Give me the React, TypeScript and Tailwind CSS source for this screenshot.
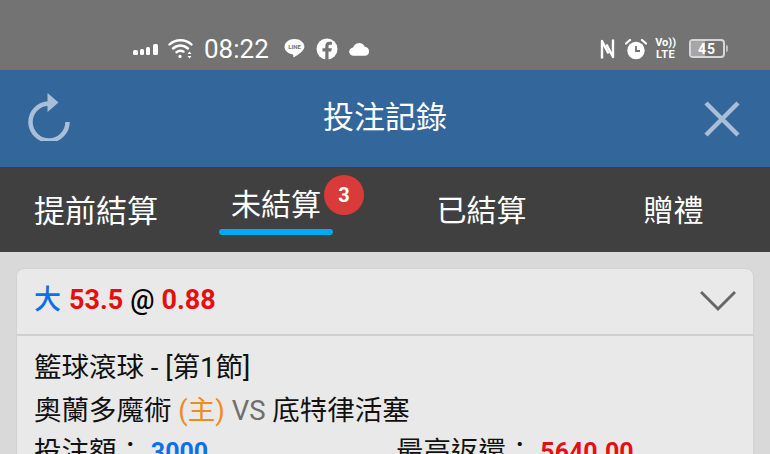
const cjk = "font-['Roboto','Noto_Sans_CJK_TC',sans-serif]"

function SignalBars() {
  return (
    <svg width="26" height="12" viewBox="0 0 26 12" fill="#fff">
      <rect x="0" y="7" width="5" height="5" rx="1.5" />
      <rect x="7" y="6" width="4" height="6" rx="1.5" />
      <rect x="13" y="4" width="4" height="8" rx="1.5" />
      <rect x="20" y="1" width="5" height="11" rx="1.5" />
    </svg>
  )
}

function Wifi() {
  return (
    <svg width="26" height="21" viewBox="0 0 26 21" fill="none" stroke="#fff" strokeWidth="2.4" strokeLinecap="round">
      <path d="M1.5 6.5C7.5 .8 17.5 .8 23.5 6.5" />
      <path d="M5 10.5C9.5 6.5 15.5 6.5 20 10.5" />
      <path d="M8.5 14.2C10.8 12.4 13.2 12.4 15.5 13.6" />
      <circle cx="12" cy="18.4" r="1.6" fill="#fff" stroke="none" />
      <path d="M21.5 13.5l-2 2.5h4zM21.5 20.5l-2-2.5h4z" fill="#fff" stroke="none" />
    </svg>
  )
}

function LineIcon() {
  return (
    <svg width="21" height="21" viewBox="0 0 21 21">
      <path d="M10.5 1C5 1 .5 4.5.5 8.8c0 3.9 3.6 7 8.3 7.6.7.2.6.8.5 1.8-.1.9.3 1.2 1.2.7 3-1.7 9.9-5.9 9.9-10.1C20.5 4.5 16 1 10.5 1z" fill="#fff" />
      <text x="10.5" y="11" textAnchor="middle" fontSize="6" fontWeight="700" fill="#737373" fontFamily="Roboto">LINE</text>
    </svg>
  )
}

function Facebook() {
  return (
    <svg width="22" height="22" viewBox="0 0 22 22">
      <circle cx="11" cy="11" r="10.5" fill="#fff" />
      <path d="M12.5 22v-8.5h2.8l.5-3.3h-3.300V8.400c0-1 .4-1.700 1.800-1.700h1.600V3.900c-.6-.1-1.500-.2-2.400-.2-2.600 0-4.200 1.500-4.200 4.300v2.200H6.500v3.300h2.800V22z" fill="#737373" />
    </svg>
  )
}

function Cloud() {
  return (
    <svg width="21" height="14" viewBox="0 0 20 13" fill="#fff">
      <path d="M4.5 13a4 4 0 0 1-.6-8A6 6 0 0 1 15 4.300 4.400 4.400 0 0 1 15.500 13z" />
    </svg>
  )
}

function NfcIcon() {
  return (
    <svg width="15" height="24" viewBox="0 0 15 24" fill="none" stroke="#fff" strokeWidth="2.4" strokeLinejoin="round">
      <path d="M2 21.500V4l6.500 12.500" />
      <path d="M13 2.500V20L6.500 7.500" />
    </svg>
  )
}

function AlarmIcon() {
  return (
    <svg width="22" height="22" viewBox="0 0 22 22">
      <circle cx="11" cy="12.500" r="8.700" fill="#fff" />
      <path d="M1 5.500L5 2M21 5.500L17 2" stroke="#fff" strokeWidth="2.200" strokeLinecap="round" />
      <path d="M11 8v5h4" fill="none" stroke="#737373" strokeWidth="1.800" />
    </svg>
  )
}

function VolteIcon() {
  return (
    <div className="flex flex-col items-center font-['Roboto',sans-serif] font-bold text-white text-[11px] leading-[12px]">
      <span>Vo))</span>
      <span className="tracking-[0.5px]">LTE</span>
    </div>
  )
}

function Battery() {
  return (
    <div className="flex items-center gap-[1px]">
      <div className="relative w-[36px] h-[19px] border-2 border-[#d6d6d6] rounded-[4px] overflow-hidden">
        <div className="h-full w-[45%] bg-[#a6a6a6]" />
        <span className="absolute inset-0 flex items-center justify-center font-['Roboto',sans-serif] font-bold text-[14px] leading-none tracking-[1px] text-white">45</span>
      </div>
      <div className="w-[2px] h-[7px] bg-[#bdbdbd] rounded-r-sm" />
    </div>
  )
}

function Refresh() {
  return (
    <svg width="46" height="48" viewBox="0 0 46 48" fill="none">
      <path d="M22.500 10.500A18.500 18.500 0 1 0 41.500 29" stroke="#a9bfd8" strokeWidth="4.500" />
      <path d="M21.500 0l11 9.500-11 9.500z" fill="#a9bfd8" />
    </svg>
  )
}

function CloseX() {
  return (
    <svg width="36" height="36" viewBox="0 0 36 36" stroke="#a9bfd8" strokeWidth="4.500">
      <path d="M2 2l32 32M34 2L2 34" />
    </svg>
  )
}

function Chevron() {
  return (
    <svg width="36" height="22" viewBox="0 0 36 22" fill="none" stroke="#666" strokeWidth="3">
      <path d="M1 2l17 17L35 2" />
    </svg>
  )
}

export default function App() {
  return (
    <div className={`w-[770px] h-[454px] overflow-hidden bg-[#d9d9d9] ${cjk}`}>
      {/* status bar */}
      <div className="h-[70px] bg-[#737373] flex items-center justify-between pl-[133px] pr-[42px] pt-[27px]">
        <div className="flex items-center">
          <SignalBars />
          <div className="ml-[9px]"><Wifi /></div>
          <span className="ml-[10px] text-[26px] leading-none text-white font-['Roboto',sans-serif]">08:22</span>
          <div className="ml-[15px]"><LineIcon /></div>
          <div className="ml-[11px]"><Facebook /></div>
          <div className="ml-[11px]"><Cloud /></div>
        </div>
        <div className="flex items-center">
          <NfcIcon />
          <div className="ml-[10px]"><AlarmIcon /></div>
          <div className="ml-[8px]"><VolteIcon /></div>
          <div className="ml-[13px]"><Battery /></div>
        </div>
      </div>

      {/* header */}
      <div className="h-[97px] bg-[#33669a] flex items-center justify-between pl-[26px] pr-[30px]">
        <div className="mb-[3px]"><Refresh /></div>
        <span className="text-[31px] leading-none text-white mr-[6px] mb-[2px]">投注記錄</span>
        <div className="mt-[1px]"><CloseX /></div>
      </div>

      {/* tabs */}
      <div className="h-[85px] bg-[#404040] flex text-white text-[30px] leading-none">
        <div className="w-[192px] flex items-center justify-center pt-[3px] text-[31px]">提前結算</div>
        <div className="relative w-[192px] flex flex-col items-center pt-[23px]">
          <span className="ml-[-24px]">未結算</span>
          <div className="mt-[9px] ml-[-24px] w-[114px] h-[6px] rounded-full bg-[#03a9f4]" />
          <div className="absolute left-[132px] top-[8px] w-[40px] h-[40px] rounded-full bg-[#d93a3a] flex items-center justify-center text-[20px] font-bold">3</div>
        </div>
        <div className="w-[193px] flex items-center justify-center pt-[3px] pl-[2px]">已結算</div>
        <div className="w-[193px] flex items-center justify-center pt-[3px]">贈禮</div>
      </div>

      {/* card */}
      <div className="pt-[17px] px-[17px]">
        <div className="bg-[#e9e9e9] rounded-t-[7px] shadow-[0_0_2px_rgba(0,0,0,0.1)] text-[27.5px] leading-[41px] text-[#111]">
          <div className="h-[67px] border-b-2 border-[#cfcfcf] flex items-center justify-between pl-[17px] pr-[17px] pb-[2px]">
            <div className="flex items-center gap-[7px] font-medium text-[27px]">
              <span className="text-[#0f6fe8]">大</span>
              <span className="text-[#e60f0f] font-bold ml-[1px]">53.5</span>
              <span className="text-black">@</span>
              <span className="text-[#e60f0f] font-bold">0.88</span>
            </div>
            <Chevron />
          </div>
          <div className="pl-[17px] pr-[18px] pt-[11px]">
            <div>籃球滾球 - [第1節]</div>
            <div className="mt-[2px]">
              奧蘭多魔術 <span className="text-[#ee8c1c]">(主)</span> <span className="text-[#6e6e6e]">VS</span> 底特律活塞
            </div>
            <div className="grid grid-cols-[362px_1fr]">
              <div>投注額： <span className="text-[#0f6fe8] font-bold text-[25px]">3000</span></div>
              <div>最高返還： <span className="text-[#e60f0f] font-bold text-[25px]">5640.00</span></div>
            </div>
          </div>
        </div>
      </div>
    </div>
  )
}
